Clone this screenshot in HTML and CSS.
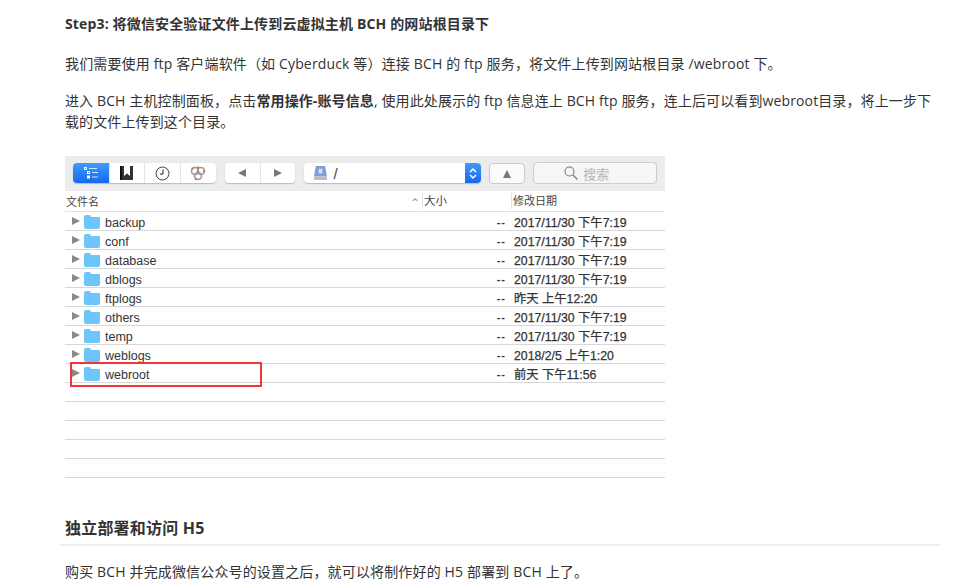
FILE: index.html
```html
<!DOCTYPE html>
<html lang="zh">
<head>
<meta charset="utf-8">
<title>Step3</title>
<link rel="stylesheet" href="styles.css">
</head>
<body>
<main class="article">
<h4 class="step">Step3: 将微信安全验证文件上传到云虚拟主机 BCH 的网站根目录下</h4>
<p class="one">我们需要使用 ftp 客户端软件（如 Cyberduck 等）连接 BCH 的 ftp 服务，将文件上传到网站根目录 /webroot 下。</p>
<p class="two">进入 BCH 主机控制面板，点击<strong>常用操作-账号信息</strong>, 使用此处展示的 ftp 信息连上 BCH ftp 服务，连上后可以看到webroot目录，将上一步下载的文件上传到这个目录。</p>
<div class="shot">
  <div class="toolbar">
    <div class="seg seg-views">
      <span class="sb active"><svg width="16" height="12" viewBox="0 0 16 12"><g fill="none" stroke="#fff"><rect x="1.5" y="0.5" width="2" height="2"/><rect x="4.5" y="4.5" width="2" height="2"/><rect x="4.5" y="9" width="2" height="2"/></g><path d="M6 1.500h8M9 5.500h6M9 10h6" stroke="#d5e6ff"/></svg></span>
      <span class="sb"><svg width="13" height="14" viewBox="0 0 13 14"><rect x="0" y="0" width="13" height="14" fill="#333"/><path d="M4 0h6v10L7 7.500 4 10z" fill="#fff"/><rect x="0" y="0" width="2" height="14" fill="#111"/></svg></span>
      <span class="sb"><svg width="15" height="15" viewBox="0 0 15 15"><circle cx="7.500" cy="7.500" r="6.500" fill="#fff" stroke="#444"/><path d="M8 3.500V8H5" fill="none" stroke="#222"/></svg></span>
      <span class="sb"><svg width="16" height="15" viewBox="0 0 16 15"><g fill="none" stroke="#999" stroke-width="1.600"><circle cx="5" cy="5" r="3.500"/><circle cx="11" cy="5" r="3.500"/><circle cx="8" cy="10" r="3.500"/></g><g fill="#e8734a"><circle cx="2.500" cy="2.500" r="1.200"/><circle cx="14" cy="5" r="1.200"/><circle cx="6" cy="13" r="1.200"/><circle cx="8" cy="1.500" r="1.200"/></g></svg></span>
    </div>
    <div class="seg seg-nav">
      <span class="sb"><span class="arrow-l"></span></span>
      <span class="sb"><span class="arrow-r"></span></span>
    </div>
    <div class="path">
      <svg class="disk" width="13" height="14" viewBox="0 0 14 15"><path d="M2 0h10l2 11H0z" fill="#7f9fd4"/><rect x="0" y="11" width="14" height="4" fill="#b4bdcb"/><rect x="5" y="3" width="4" height="5" fill="#d3e0f3"/></svg>
      <span class="slash">/</span>
      <span class="stepper"><svg width="10" height="15" viewBox="0 0 10 15"><path d="M2 6l3-3 3 3M2 9l3 3 3-3" fill="none" stroke="#fff" stroke-width="1.500"/></svg></span>
    </div>
    <span class="up"><span class="arrow-u"></span></span>
    <div class="search"><svg width="14" height="14" viewBox="0 0 14 14"><circle cx="5.500" cy="5.500" r="4.500" fill="none" stroke="#777" stroke-width="1.100"/><path d="M9 9l4.500 4.500" stroke="#777" stroke-width="1.300"/></svg><span>搜索</span></div>
  </div>
  <div class="cols">
    <span class="col-name">文件名</span>
    <span class="col-caret">⌃</span>
    <span class="col-size">大小</span>
    <span class="col-date">修改日期</span>
  </div>
  <div class="row"><span class="tri"></span><span class="folder"></span><span class="fname">backup</span><span class="dash">--</span><span class="when">2017/11/30 下午7:19</span></div>
  <div class="row"><span class="tri"></span><span class="folder"></span><span class="fname">conf</span><span class="dash">--</span><span class="when">2017/11/30 下午7:19</span></div>
  <div class="row"><span class="tri"></span><span class="folder"></span><span class="fname">database</span><span class="dash">--</span><span class="when">2017/11/30 下午7:19</span></div>
  <div class="row"><span class="tri"></span><span class="folder"></span><span class="fname">dblogs</span><span class="dash">--</span><span class="when">2017/11/30 下午7:19</span></div>
  <div class="row"><span class="tri"></span><span class="folder"></span><span class="fname">ftplogs</span><span class="dash">--</span><span class="when">昨天 上午12:20</span></div>
  <div class="row"><span class="tri"></span><span class="folder"></span><span class="fname">others</span><span class="dash">--</span><span class="when">2017/11/30 下午7:19</span></div>
  <div class="row"><span class="tri"></span><span class="folder"></span><span class="fname">temp</span><span class="dash">--</span><span class="when">2017/11/30 下午7:19</span></div>
  <div class="row"><span class="tri"></span><span class="folder"></span><span class="fname">weblogs</span><span class="dash">--</span><span class="when">2018/2/5 上午1:20</span></div>
  <div class="row"><span class="tri"></span><span class="folder"></span><span class="fname">webroot</span><span class="dash">--</span><span class="when">前天 下午11:56</span></div>
  <div class="row"></div>
  <div class="row"></div>
  <div class="row"></div>
  <div class="row"></div>
  <div class="row"></div>
  <div class="mark"></div>
</div>
<h3 class="section">独立部署和访问 H5</h3>
<p class="last">购买 BCH 并完成微信公众号的设置之后，就可以将制作好的 H5 部署到 BCH 上了。</p>
</main>
</body>
</html>
```
FILE: styles.css
```css
html, body { margin: 0; padding: 0; background: #fff; }
body { width: 956px; height: 588px; overflow: hidden; font-family: "Open Sans", "Noto Sans CJK SC", sans-serif; color: #333; font-size: 14px; }
.article { width: 880px; margin-left: 60px; padding-left: 5px; box-sizing: border-box; }
.step { margin: 0; padding-top: 14px; font-size: 14px; line-height: 20px; font-weight: 700; color: #333; letter-spacing: 0.15px; }
.one { margin: 19px 0 0; line-height: 22px; letter-spacing: 0.15px; }
.two { margin: 15px 0 0; line-height: 21px; padding-right: 5px; letter-spacing: 0.12px; }
.two strong { font-weight: 700; }
.shot { position: relative; width: 600px; margin-top: 24px; background: #fff; font-family: "Liberation Sans", "Noto Sans CJK SC", sans-serif; }
.toolbar { height: 35px; background: #ececec; display: flex; align-items: flex-start; padding: 7px 8px 0; box-sizing: border-box; }
.seg { display: flex; height: 20px; background: #fff; border-radius: 4px; box-shadow: 0 1px 1px #bbb; overflow: hidden; }
.sb { width: 36px; display: flex; align-items: center; justify-content: center; border-left: 1px solid #e4e4e4; box-sizing: border-box; }
.sb:first-child { border-left: 0; }
.active { background: linear-gradient(#3f9bfb, #1668f0); }
.seg-views { width: 143px; }
.seg-nav { width: 71px; margin-left: 9px; }
.arrow-l { border: 4px solid transparent; border-left: 0; border-right: 8px solid #777; }
.arrow-r { border: 4px solid transparent; border-right: 0; border-left: 8px solid #777; }
.path { flex: 0 0 177px; height: 20px; margin-left: 9px; background: #fff; border-radius: 4px; box-shadow: 0 1px 1px #bbb; display: flex; align-items: center; padding-left: 10px; box-sizing: border-box; overflow: hidden; font-size: 15px; color: #444; }
.disk { flex: none; }
.slash { margin-left: 6px; }
.stepper { margin-left: auto; width: 16px; height: 20px; background: linear-gradient(#3f9bfb, #1668f0); display: flex; align-items: center; justify-content: center; }
.up { width: 36px; height: 21px; margin-left: 8px; background: #fbfbfb; border: 1px solid #c9c9c9; border-radius: 4px; box-sizing: border-box; display: flex; align-items: center; justify-content: center; }
.arrow-u { border: 4px solid transparent; border-top: 0; border-bottom: 8px solid #777; }
.search { width: 124px; height: 22px; margin-top: -1px; margin-left: 8px; padding-left: 30px; background: #f6f6f6; border: 1px solid #ccc; border-radius: 4px; box-sizing: border-box; display: flex; align-items: center; gap: 5px; color: #b5b5b5; font-size: 13px; }
.cols { height: 21px; display: flex; align-items: center; border-bottom: 1px solid #e2e2e2; box-sizing: border-box; font-size: 11px; color: #444; }
.col-name { margin-left: 1px; width: 344px; }
.col-caret { width: 12px; color: #999; font-size: 12px; line-height: 16px; padding-top: 3px; box-sizing: border-box; }
.col-size { width: 89px; height: 16px; line-height: 16px; border-left: 1px solid #e2e2e2; padding-left: 1px; box-sizing: border-box; font-size: 11.500px; }
.col-date { flex: 1; height: 16px; line-height: 16px; border-left: 1px solid #e2e2e2; padding-left: 1px; }
.row { height: 19px; display: flex; align-items: center; border-bottom: 1px solid #d8d8d8; box-sizing: border-box; font-size: 12.500px; color: #333; padding-top: 1px; }
.tri { width: 0; height: 0; margin: -1px 0 0 7px; border: 4px solid transparent; border-right: 0; border-left: 8px solid #8a8a8a; }
.folder { position: relative; width: 16px; height: 12px; margin: 2px 0 0 4px; background: #6cc6fb; border-radius: 1px 1px 2px 2px; }
.folder::before { content: ""; position: absolute; left: 0; top: -2px; width: 7px; height: 3px; background: #6cc6fb; border-radius: 2px 2px 0 0; }
.fname { margin: 2px 0 0 5px; width: 380px; }
.dash { width: 21px; text-align: right; letter-spacing: 1px; font-weight: 700; font-size: 11px; }
.when { margin-left: 8px; font-size: 12.300px; -webkit-text-stroke: 0.25px #333; }
.mark { position: absolute; left: 5px; top: 206px; width: 192px; height: 25px; border: 2px solid #f4343a; box-sizing: border-box; }
.section { margin: 38px 0 0 -5px; padding: 0 0 4px 5px; border-bottom: 2px solid #eee; font-size: 16px; line-height: 24px; font-weight: 700; color: #333; letter-spacing: 0.2px; }
.last { margin: 15px 0 0; line-height: 22px; letter-spacing: 0.15px; }
```
